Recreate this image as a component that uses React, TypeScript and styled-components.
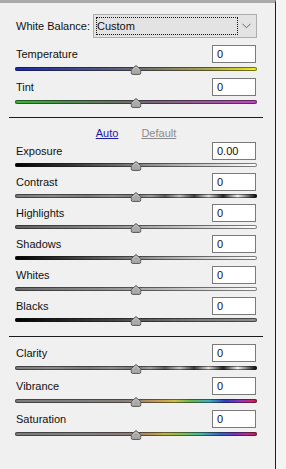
import React from "react";
import styled, { createGlobalStyle } from "styled-components";

const GlobalStyle = createGlobalStyle`
  html, body { margin: 0; padding: 0; }
  body {
    background: #f3f3f3;
    font-family: "Liberation Sans", Arial, sans-serif;
    font-size: 11px;
    color: #111;
  }
`;

const Page = styled.div`
  display: flex;
  height: 469px;
  width: 286px;
  overflow: hidden;
`;

const Panel = styled.div`
  width: 276px;
  box-sizing: border-box;
  border-top: 3px solid #a9a9a9;
  border-right: 1px solid #1e1e1e;
  background: #f0f0f0;
  padding: 11px 18px 0 15px;
  display: flex;
  flex-direction: column;
`;

const Strip = styled.div`
  flex: 1;
  background: #f4f4f4;
`;

const WBRow = styled.div`
  display: flex;
  align-items: center;
  height: 24px;
`;

const Label = styled.span`
  padding-left: 1px;
  white-space: nowrap;
`;

const Dropdown = styled.div`
  margin-left: auto;
  width: 164px;
  height: 24px;
  box-sizing: border-box;
  border: 1px solid #adadad;
  background: #e3e3e3;
  padding: 2px 5px 2px 2px;
  display: flex;
  align-items: center;
`;

const Focus = styled.div`
  width: 142px;
  height: 18px;
  box-sizing: border-box;
  border: 1px dotted #111;
  padding-left: 0px;
  line-height: 16px;
`;

const Chevron = styled.svg`
  margin-left: auto;
  display: block;
`;

const Row = styled.div<{ $mt?: number }>`
  margin-top: ${(p) => p.$mt ?? 0}px;
  display: flex;
  flex-direction: column;
`;

const Header = styled.div`
  display: flex;
  align-items: center;
  justify-content: space-between;
  height: 18px;
`;

const ValueBox = styled.div`
  width: 44px;
  height: 18px;
  box-sizing: border-box;
  border: 1px solid #7a7a7a;
  background: #fff;
  padding-left: 4px;
  line-height: 16px;
  margin-right: 1px;
`;

const TrackArea = styled.div<{ $h: number; $top: number }>`
  position: relative;
  height: ${(p) => p.$h}px;
  padding-top: ${(p) => p.$top}px;
  box-sizing: border-box;
`;

const Track = styled.div<{ $bg: string }>`
  height: 4px;
  border-radius: 2px;
  background: ${(p) => p.$bg};
  box-shadow: inset 0 0 0 1px rgba(20, 20, 20, 0.55);
`;

const Thumb = styled.svg<{ $top: number }>`
  position: absolute;
  left: 50%;
  top: ${(p) => p.$top}px;
  transform: translateX(-50%);
  display: block;
`;

const Separator = styled.div<{ $mt: number }>`
  margin: ${(p) => p.$mt}px -6px 0 -6px;
  height: 1px;
  background: #1c1c1c;
`;

const AutoRow = styled.div`
  margin-top: 8px;
  margin-bottom: 2px;
  height: 14px;
  line-height: 14px;
  display: flex;
  justify-content: center;
  gap: 23px;
`;

const LinkText = styled.span<{ $active?: boolean }>`
  text-decoration: underline;
  color: ${(p) => (p.$active ? "#1b1ba8" : "#8a8a8a")};
`;

const G = {
  temp: "linear-gradient(to right, #1b28b4 0%, #3a418f 20%, #6a6a78 50%, #a3a050 78%, #f0ec1c 100%)",
  tint: "linear-gradient(to right, #34b834 0%, #508a50 22%, #6e6a6e 50%, #9a5a9a 78%, #c63ec6 100%)",
  exposure: "linear-gradient(to right, #000 0%, #3a3a3a 25%, #808080 50%, #c4c4c4 75%, #fff 100%)",
  contrast:
    "linear-gradient(to right, #7a7a7a 0%, #8a8a8a 15%, #7a7a7a 30%, #8e8e8e 40%, #777 50%, #9a9a9a 56%, #5a5a5a 62%, #bdbdbd 68%, #3e3e3e 74%, #dcdcdc 80%, #262626 86%, #f0f0f0 92%, #000 100%)",
  highlights: "linear-gradient(to right, #606060 0%, #8a8a8a 35%, #b0b0b0 60%, #dedede 82%, #fff 100%)",
  shadows: "linear-gradient(to right, #000 0%, #404040 25%, #858585 50%, #c8c8c8 75%, #fff 100%)",
  whites: "linear-gradient(to right, #6a6a6a 0%, #8e8e8e 35%, #b4b4b4 60%, #e0e0e0 82%, #fff 100%)",
  blacks: "linear-gradient(to right, #000 0%, #2a2a2a 25%, #555 50%, #7a7a7a 75%, #8e8e8e 100%)",
  clarity:
    "linear-gradient(to right, #7a7a7a 0%, #8a8a8a 15%, #7a7a7a 30%, #8e8e8e 40%, #777 50%, #a0a0a0 56%, #5a5a5a 62%, #c4c4c4 68%, #3a3a3a 74%, #e0e0e0 80%, #222 86%, #f2f2f2 92%, #000 100%)",
  vibrance:
    "linear-gradient(to right, #7c7c7c 0%, #808080 30%, #8a8078 45%, #a08a70 52%, #c8a050 60%, #c8c040 66%, #60b850 73%, #40b0c0 80%, #3040c0 87%, #9030c0 93%, #d02080 97%, #c02050 100%)",
  saturation:
    "linear-gradient(to right, #7c7c7c 0%, #828282 25%, #8a7c80 38%, #907c78 46%, #b0905c 55%, #c0b048 62%, #80c050 69%, #40b8a0 77%, #3a60c8 85%, #7a30c0 91%, #c02890 96%, #b82050 100%)",
};

type SliderProps = {
  label: string;
  value: string;
  bg: string;
  area: number;
  top: number;
  mt?: number;
};

const ThumbIcon: React.FC<{ top: number }> = ({ top }) => (
  <Thumb $top={top} width="11" height="10" viewBox="0 0 11 10">
    <path
      d="M5.5 0.6 L10.4 4.6 L10.4 7.8 Q10.4 9.4 8.8 9.4 L2.2 9.4 Q0.6 9.4 0.6 7.8 L0.6 4.6 Z"
      fill="#a9a9a9"
      stroke="#555"
      strokeWidth="1"
    />
    <path d="M2 5 L5.5 2 L9 5" fill="none" stroke="#d0d0d0" strokeWidth="0.8" />
  </Thumb>
);

const Slider: React.FC<SliderProps> = ({ label, value, bg, area, top, mt }) => (
  <Row $mt={mt}>
    <Header>
      <Label>{label}</Label>
      <ValueBox>{value}</ValueBox>
    </Header>
    <TrackArea $h={area} $top={top}>
      <Track $bg={bg} />
      <ThumbIcon top={top - 2} />
    </TrackArea>
  </Row>
);

export default function App() {
  return (
    <Page>
      <GlobalStyle />
      <Panel>
        <WBRow>
          <Label>White Balance:</Label>
          <Dropdown>
            <Focus>Custom</Focus>
            <Chevron width="9" height="6" viewBox="0 0 9 6">
              <polyline points="0.5,0.8 4.5,4.8 8.5,0.8" fill="none" stroke="#666" strokeWidth="1" />
            </Chevron>
          </Dropdown>
        </WBRow>
        <Slider label="Temperature" value="0" bg={G.temp} area={15} top={4} mt={7} />
        <Slider label="Tint" value="0" bg={G.tint} area={15} top={4} />
        <Separator $mt={6} />
        <AutoRow>
          <LinkText $active>Auto</LinkText>
          <LinkText>Default</LinkText>
        </AutoRow>
        <Slider label="Exposure" value="0.00" bg={G.exposure} area={13} top={3} />
        <Slider label="Contrast" value="0" bg={G.contrast} area={13} top={3} />
        <Slider label="Highlights" value="0" bg={G.highlights} area={13} top={3} />
        <Slider label="Shadows" value="0" bg={G.shadows} area={13} top={3} />
        <Slider label="Whites" value="0" bg={G.whites} area={13} top={3} />
        <Slider label="Blacks" value="0" bg={G.blacks} area={13} top={3} />
        <Separator $mt={8} />
        <Slider label="Clarity" value="0" bg={G.clarity} area={15} top={4} mt={7} />
        <Slider label="Vibrance" value="0" bg={G.vibrance} area={15} top={4} />
        <Slider label="Saturation" value="0" bg={G.saturation} area={15} top={4} />
      </Panel>
      <Strip />
    </Page>
  );
}
